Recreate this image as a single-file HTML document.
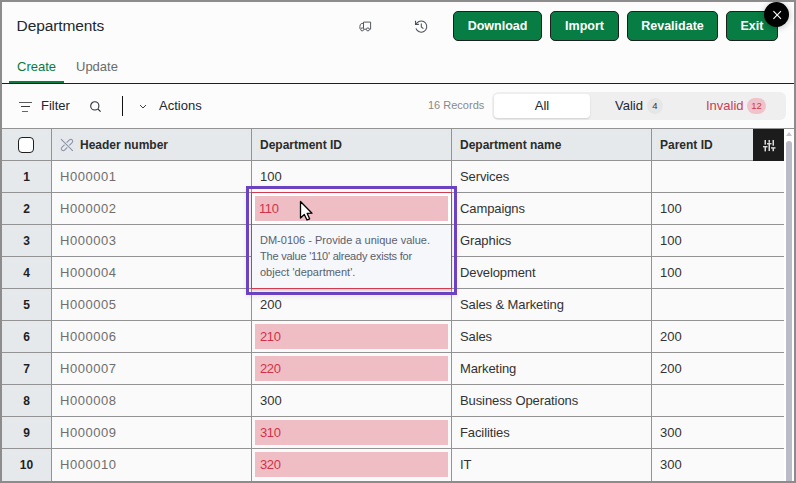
<!DOCTYPE html>
<html><head><meta charset="utf-8">
<style>
*{box-sizing:border-box;margin:0;padding:0}
html,body{width:796px;height:483px;overflow:hidden;background:#fcfcfc;font-family:"Liberation Sans",sans-serif;position:relative}
.a{position:absolute;white-space:nowrap}
.btn{position:absolute;top:11px;height:30px;background:#077c43;border:1px solid #1b1f1d;border-radius:5px;color:#fff;font-weight:bold;font-size:12.5px;line-height:28px;text-align:center}
.t13{font-size:13px;line-height:16px}
.cell{position:absolute;font-size:13px;line-height:32px;height:32px;white-space:nowrap;margin-top:1px}
.rn{position:absolute;left:2px;width:49px;text-align:center;font-weight:bold;font-size:12px;line-height:32px;color:#1f1f1f;margin-top:1px}
.hd{position:absolute;top:129px;font-size:12px;font-weight:bold;line-height:32px;color:#2b2b2b;white-space:nowrap}
.err{position:absolute;background:#efbdc4;color:#cf334b;font-size:13px;line-height:25px;padding-left:5px;letter-spacing:-0.4px}
</style></head><body>

<div class="a" style="left:16.6px;top:15.6px;font-size:15.5px;letter-spacing:-0.12px;line-height:20px;color:#23272e">Departments</div>
<svg class="a" style="left:354px;top:16px" width="24" height="20" viewBox="0 0 24 20">
<path d="M9.5 12.5 V6.1 H16.6 V13.2 H15.4 M12.4 13.2 H9.9" fill="none" stroke="#55595f" stroke-width="1"/>
<path d="M9.5 7.4 H7.9 Q5.9 7.9 5.9 10.4 V12.8" fill="none" stroke="#55595f" stroke-width="1"/>
<circle cx="8.2" cy="13.4" r="1.5" fill="#fcfcfc" stroke="#55595f" stroke-width="1"/>
<circle cx="13.9" cy="13.4" r="1.5" fill="#fcfcfc" stroke="#55595f" stroke-width="1"/>
</svg>
<svg class="a" style="left:410px;top:16px" width="24" height="20" viewBox="0 0 24 20">
<path d="M5.9 8.2 L7 6.8 A5.6 5.6 0 1 1 5.9 12.4" fill="none" stroke="#4a4f57" stroke-width="1.05"/>
<path d="M5.5 4.8 V8.4 H8.9" fill="none" stroke="#4a4f57" stroke-width="1.1"/>
<path d="M11.3 7.5 V11 L13.4 12.7" fill="none" stroke="#4a4f57" stroke-width="1.05"/>
</svg>
<div class="btn" style="left:453px;width:89px">Download</div>
<div class="btn" style="left:550px;width:69px">Import</div>
<div class="btn" style="left:627px;width:91px">Revalidate</div>
<div class="btn" style="left:726px;width:52px">Exit</div>
<div class="a" style="left:764px;top:2px;width:25px;height:25px;border-radius:50%;background:#000;box-shadow:0 1px 6px rgba(0,0,0,.25)"></div>
<svg class="a" style="left:772px;top:10px" width="11" height="11" viewBox="0 0 11 11"><path d="M1.4 1.2 L9 8.8 M9 1.2 L1.4 8.8" stroke="#fff" stroke-width="1.1"/></svg>
<div class="a t13" style="left:17px;top:59px;color:#0a7a3e">Create</div>
<div class="a t13" style="left:76px;top:59px;color:#6b6b6b">Update</div>
<div class="a" style="left:9px;top:81px;width:55px;height:2px;background:#077c43"></div>
<div class="a" style="left:2px;top:83px;width:792px;height:1px;background:#1e1e1e"></div>
<div class="a" style="left:19px;top:102px;width:13px;height:1px;background:#5a5a5a"></div>
<div class="a" style="left:21px;top:106px;width:9px;height:1px;background:#3a3a3a"></div>
<div class="a" style="left:22px;top:111px;width:6px;height:1px;background:#666"></div>
<div class="a t13" style="left:41px;top:98px;color:#23272e">Filter</div>
<svg class="a" style="left:84px;top:96px" width="24" height="20" viewBox="0 0 24 20">
<circle cx="10.8" cy="9.9" r="4.1" fill="none" stroke="#2f333a" stroke-width="1.1"/>
<path d="M13.9 13 L16.6 15.6" stroke="#2f333a" stroke-width="1.1"/></svg>
<div class="a" style="left:122px;top:96px;width:1px;height:20px;background:#111"></div>
<svg class="a" style="left:139px;top:104px" width="8" height="5" viewBox="0 0 8 5">
<path d="M1 1 L4 4 L7 1" fill="none" stroke="#3a3f47" stroke-width="1"/></svg>
<div class="a t13" style="left:159px;top:98px;color:#23272e">Actions</div>
<div class="a" style="left:428px;top:98px;font-size:11px;line-height:14px;color:#8a8a8a">16 Records</div>
<div class="a" style="left:492px;top:92px;width:294px;height:28px;background:#efefef;border-radius:6px"></div>
<div class="a" style="left:494px;top:94px;width:96px;height:24px;background:#fff;border-radius:4px;box-shadow:0 1px 2px rgba(0,0,0,.13);font-size:13px;line-height:24px;text-align:center;color:#23272e">All</div>
<div class="a t13" style="left:615px;top:98px;color:#23272e">Valid</div>
<div class="a" style="left:647px;top:98px;width:16px;height:16px;border-radius:8px;background:#e6e6e6;font-size:9.5px;line-height:16px;text-align:center;color:#333">4</div>
<div class="a t13" style="left:706px;top:98px;color:#cc3d52">Invalid</div>
<div class="a" style="left:747px;top:98px;width:19px;height:16px;border-radius:8px;background:#f0c3ca;font-size:9.5px;line-height:16px;text-align:center;color:#cc3a50">12</div>
<div class="a" style="left:2px;top:128px;width:782px;height:32px;background:#e5e9ec"></div>
<div class="a" style="left:2px;top:160px;width:49px;height:321px;background:#e5e9ec"></div>
<div class="a" style="left:52px;top:161px;width:732px;height:320px;background:#fafafa"></div>
<div class="a" style="left:2px;top:128px;width:782px;height:1px;background:#939393"></div>
<div class="a" style="left:2px;top:160px;width:782px;height:1px;background:#939393"></div>
<div class="a" style="left:2px;top:192px;width:782px;height:1px;background:#939393"></div>
<div class="a" style="left:2px;top:224px;width:782px;height:1px;background:#939393"></div>
<div class="a" style="left:2px;top:256px;width:782px;height:1px;background:#939393"></div>
<div class="a" style="left:2px;top:288px;width:782px;height:1px;background:#939393"></div>
<div class="a" style="left:2px;top:320px;width:782px;height:1px;background:#939393"></div>
<div class="a" style="left:2px;top:352px;width:782px;height:1px;background:#939393"></div>
<div class="a" style="left:2px;top:384px;width:782px;height:1px;background:#939393"></div>
<div class="a" style="left:2px;top:416px;width:782px;height:1px;background:#939393"></div>
<div class="a" style="left:2px;top:448px;width:782px;height:1px;background:#939393"></div>
<div class="a" style="left:51px;top:128px;width:1px;height:353px;background:#939393"></div>
<div class="a" style="left:251px;top:128px;width:1px;height:353px;background:#939393"></div>
<div class="a" style="left:451px;top:128px;width:1px;height:353px;background:#939393"></div>
<div class="a" style="left:651px;top:128px;width:1px;height:353px;background:#939393"></div>
<div class="a" style="left:18px;top:137px;width:16px;height:16px;border:1.5px solid #1f1f1f;border-radius:4px;background:#fff"></div>
<svg class="a" style="left:56px;top:134px" width="22" height="20" viewBox="0 0 22 20">
<rect x="3.75" y="9.1" width="14.5" height="3.8" rx="1.9" transform="rotate(-45 11 11)" fill="none" stroke="#8a90a6" stroke-width="1.05"/>
<path d="M5 5.2 L16.8 16.8" stroke="#e5e9ec" stroke-width="3"/>
<path d="M5 5.2 L16.8 16.8" stroke="#8a90a6" stroke-width="1.05"/></svg>
<div class="hd" style="left:80px">Header number</div>
<div class="hd" style="left:260px">Department ID</div>
<div class="hd" style="left:460px">Department name</div>
<div class="hd" style="left:660px">Parent ID</div>
<div class="a" style="left:753px;top:129px;width:31px;height:32px;background:#1c1c1c"></div>
<svg class="a" style="left:756px;top:132px" width="24" height="24" viewBox="0 0 24 24" fill="#dcdcdc">
<rect x="8.5" y="8" width="1.5" height="4.6"/><rect x="7" y="14" width="4.5" height="1.4"/><rect x="8.5" y="15" width="1.5" height="4.4"/>
<rect x="12.5" y="8" width="1.5" height="2.7"/><rect x="11" y="11" width="4.5" height="1.4"/><rect x="12.5" y="12" width="1.5" height="7"/>
<rect x="16.5" y="8" width="1.5" height="5.7"/><rect x="15" y="15.2" width="4.5" height="1.4"/><rect x="16.5" y="16" width="1.5" height="3.2"/>
</svg>
<div class="rn" style="top:160px">1</div>
<div class="cell" style="left:60px;top:160px;color:#6e6e6e;letter-spacing:0.55px">H000001</div>
<div class="cell" style="left:260px;top:160px;color:#333">100</div>
<div class="cell" style="left:460px;top:160px;color:#333;letter-spacing:-0.1px">Services</div>
<div class="rn" style="top:192px">2</div>
<div class="cell" style="left:60px;top:192px;color:#6e6e6e;letter-spacing:0.55px">H000002</div>
<div class="err" style="left:255px;top:196px;width:193px;height:25px">110</div>
<div class="cell" style="left:460px;top:192px;color:#333;letter-spacing:-0.1px">Campaigns</div>
<div class="cell" style="left:660px;top:192px;color:#333">100</div>
<div class="rn" style="top:224px">3</div>
<div class="cell" style="left:60px;top:224px;color:#6e6e6e;letter-spacing:0.55px">H000003</div>
<div class="cell" style="left:460px;top:224px;color:#333;letter-spacing:-0.1px">Graphics</div>
<div class="cell" style="left:660px;top:224px;color:#333">100</div>
<div class="rn" style="top:256px">4</div>
<div class="cell" style="left:60px;top:256px;color:#6e6e6e;letter-spacing:0.55px">H000004</div>
<div class="cell" style="left:460px;top:256px;color:#333;letter-spacing:-0.1px">Development</div>
<div class="cell" style="left:660px;top:256px;color:#333">100</div>
<div class="rn" style="top:288px">5</div>
<div class="cell" style="left:60px;top:288px;color:#6e6e6e;letter-spacing:0.55px">H000005</div>
<div class="cell" style="left:260px;top:288px;color:#333">200</div>
<div class="cell" style="left:460px;top:288px;color:#333;letter-spacing:-0.1px">Sales &amp; Marketing</div>
<div class="rn" style="top:320px">6</div>
<div class="cell" style="left:60px;top:320px;color:#6e6e6e;letter-spacing:0.55px">H000006</div>
<div class="err" style="left:255px;top:324px;width:193px;height:25px">210</div>
<div class="cell" style="left:460px;top:320px;color:#333;letter-spacing:-0.1px">Sales</div>
<div class="cell" style="left:660px;top:320px;color:#333">200</div>
<div class="rn" style="top:352px">7</div>
<div class="cell" style="left:60px;top:352px;color:#6e6e6e;letter-spacing:0.55px">H000007</div>
<div class="err" style="left:255px;top:356px;width:193px;height:25px">220</div>
<div class="cell" style="left:460px;top:352px;color:#333;letter-spacing:-0.1px">Marketing</div>
<div class="cell" style="left:660px;top:352px;color:#333">200</div>
<div class="rn" style="top:384px">8</div>
<div class="cell" style="left:60px;top:384px;color:#6e6e6e;letter-spacing:0.55px">H000008</div>
<div class="cell" style="left:260px;top:384px;color:#333">300</div>
<div class="cell" style="left:460px;top:384px;color:#333;letter-spacing:-0.1px">Business Operations</div>
<div class="rn" style="top:416px">9</div>
<div class="cell" style="left:60px;top:416px;color:#6e6e6e;letter-spacing:0.55px">H000009</div>
<div class="err" style="left:255px;top:420px;width:193px;height:25px">310</div>
<div class="cell" style="left:460px;top:416px;color:#333;letter-spacing:-0.1px">Facilities</div>
<div class="cell" style="left:660px;top:416px;color:#333">300</div>
<div class="rn" style="top:448px">10</div>
<div class="cell" style="left:60px;top:448px;color:#6e6e6e;letter-spacing:0.55px">H000010</div>
<div class="err" style="left:255px;top:452px;width:193px;height:25px">320</div>
<div class="cell" style="left:460px;top:448px;color:#333;letter-spacing:-0.1px">IT</div>
<div class="cell" style="left:660px;top:448px;color:#333">300</div>
<div class="a" style="left:784px;top:128px;width:10px;height:1px;background:#939393"></div>
<div class="a" style="left:784px;top:129px;width:10px;height:352px;background:#fff"></div>
<svg class="a" style="left:785px;top:131px" width="8" height="6" viewBox="0 0 8 6"><path d="M1 5 L4 1 L7 5 Z" fill="#c4c6cf"/></svg>
<div class="a" style="left:786px;top:141px;width:6px;height:345px;background:#b9bbc7;border-radius:3px"></div>
<div class="a" style="left:246px;top:186px;width:211px;height:109px;border:3px solid #6a42c2;box-shadow:0 2px 5px rgba(0,0,0,.07)"></div>
<div class="a" style="left:251px;top:192px;width:201px;height:97px;border:1px solid #d23a50;background:#fff;box-shadow:0 2px 2px rgba(0,0,0,.16)"></div>
<div class="a" style="left:252px;top:224px;width:199px;height:1px;background:#939393"></div>
<div class="a" style="left:252px;top:225px;width:199px;height:63px;background:#f5f7fb"></div>
<div class="err" style="left:255px;top:196px;width:193px;height:25px;padding-left:4px">110</div>
<div class="a" style="left:260px;top:232px;font-size:11px;line-height:16px;color:#5a606b;white-space:normal;width:190px">DM-0106 - Provide a unique value.<br><span style="letter-spacing:-0.22px">The value '110' already exists for</span><br>object 'department'.</div>
<svg class="a" style="left:299px;top:200.3px" width="16" height="22" viewBox="0 0 16 22">
<path d="M1.5 1.5 L1.5 18 L5.3 14.5 L8 20 L10.6 18.8 L8.2 13.4 L13 13.2 Z" fill="#fff" stroke="#000" stroke-width="1.3" stroke-linejoin="round"/></svg>
<div class="a" style="left:0;top:0;width:796px;height:2px;background:#8c8c8c"></div>
<div class="a" style="left:0;top:481px;width:796px;height:2px;background:#8c8c8c"></div>
<div class="a" style="left:0;top:0;width:2px;height:483px;background:#8c8c8c"></div>
<div class="a" style="left:794px;top:0;width:2px;height:483px;background:#8c8c8c"></div>
</body></html>
